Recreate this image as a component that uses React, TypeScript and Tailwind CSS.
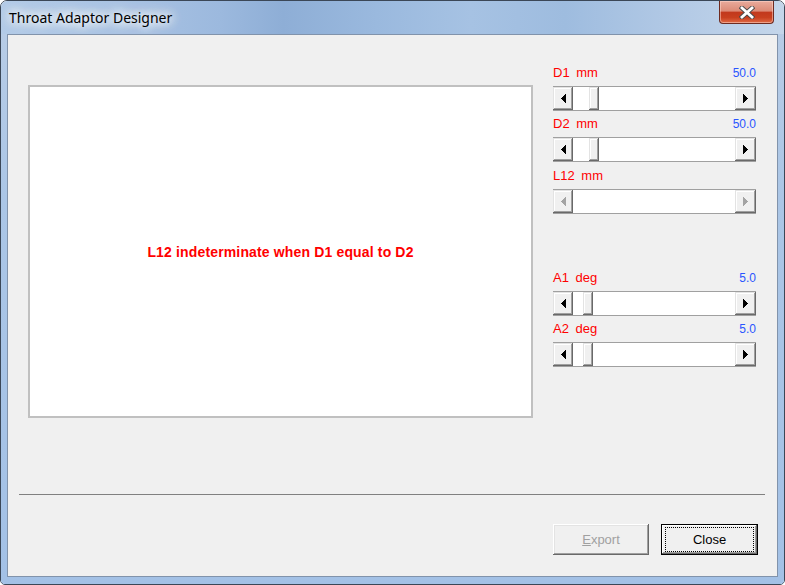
import React from "react";

const raised =
  "shadow-[inset_-1px_-1px_#696969,inset_1px_1px_#e3e3e3,inset_-2px_-2px_#a0a0a0,inset_2px_2px_#ffffff]";

function Arrow({ dir, disabled }: { dir: "left" | "right"; disabled?: boolean }) {
  return (
    <svg width="5" height="9" viewBox="0 0 5 9" shapeRendering="crispEdges">
      <polygon
        points={dir === "left" ? "5,0 0,4.5 5,9" : "0,0 5,4.5 0,9"}
        fill={disabled ? "#a3a3a3" : "#000000"}
      />
    </svg>
  );
}

function ScrollBar({ thumb, disabled }: { thumb?: number; disabled?: boolean }) {
  return (
    <div className="flex h-[25px] w-[203px] border-y border-[#a0a0a0]">
      <div className={`flex h-full w-[20px] items-center justify-center bg-[#f0f0f0] ${raised}`}>
        <Arrow dir="left" disabled={disabled} />
      </div>
      <div className="relative h-full flex-1 bg-white">
        {thumb !== undefined && (
          <div
            className={`absolute top-0 h-full w-[10px] bg-[#f0f0f0] ${raised}`}
            style={{ left: thumb }}
          />
        )}
      </div>
      <div className={`flex h-full w-[21px] items-center justify-center bg-[#f0f0f0] ${raised}`}>
        <Arrow dir="right" disabled={disabled} />
      </div>
    </div>
  );
}

function Label({ name, value }: { name: string; value?: string }) {
  return (
    <div className="mb-[6px] flex h-[14px] items-center justify-between leading-[14px] font-['Liberation_Sans',Arial,sans-serif]">
      <span className="whitespace-pre text-[13px] text-[#ff0000] [word-spacing:3px]">{name}</span>
      {value && <span className="text-[12px] text-[#2a55ff]">{value}</span>}
    </div>
  );
}

export default function App() {
  return (
    <div className="h-[585px] w-[785px] bg-white">
      <div className="flex h-full w-full flex-col overflow-hidden rounded-t-[7px] rounded-b-[5px] border border-[#3b4757]">
        {/* title bar */}
        <div className="flex h-[33px] shrink-0 items-start bg-[linear-gradient(90deg,#b3cbe7_0%,#a9c3e3_15%,#9cb9de_28%,#8eaed6_36%,#9ab9de_48%,#a6c2e3_60%,#9ebcdf_72%,#b5cbe6_88%,#c4d6ea_100%)]">
          <div className="ml-[8px] mt-[7px] text-[14px] leading-[20px] text-black font-['Noto_Sans',sans-serif] [text-shadow:0_0_10px_#ffffff,0_0_10px_#ffffff,0_0_14px_#ffffff,0_0_18px_#e6f0fa]">
            Throat Adaptor Designer
          </div>
          <div className="ml-auto mr-[10px] flex h-[23px] w-[55px] items-center justify-center rounded-b-[4px] border border-t-0 border-[#6e2b20] bg-[linear-gradient(180deg,#e9ab9c_0%,#dc8b77_45%,#c2391d_52%,#c8401f_75%,#e06a45_100%)] shadow-[inset_0_0_0_1px_rgba(255,220,210,0.5)]">
            <svg width="16" height="13" viewBox="0 0 16 13">
              <path d="M3 2 L13 11 M13 2 L3 11" stroke="#4a4a4a" strokeWidth="4.6" strokeLinecap="square" />
              <path d="M3 2 L13 11 M13 2 L3 11" stroke="#ffffff" strokeWidth="2.8" strokeLinecap="square" />
            </svg>
          </div>
        </div>

        {/* frame body */}
        <div className="flex flex-1 flex-col bg-[linear-gradient(180deg,#b7cce6_0%,#abc6e6_30%,#a3c1e6_100%)] px-[6px] pb-[7px]">
          <div className="flex flex-1 flex-col border border-[#8193ab] bg-[#f0f0f0]">
            <div className="flex h-[459px]">
              <div className="ml-[20px] mt-[50px] flex h-[333px] w-[505px] items-center justify-center border-2 border-[#c0c0c0] bg-white">
                <span className="mt-[2px] text-[14px] font-bold tracking-[0.15px] text-[#ff0000] font-['Liberation_Sans',Arial,sans-serif]">
                  L12 indeterminate when D1 equal to D2
                </span>
              </div>
              <div className="ml-[20px] mt-[31px] flex w-[203px] flex-col">
                <Label name="D1 mm" value="50.0" />
                <ScrollBar thumb={16} />
                <div className="h-[6px]" />
                <Label name="D2 mm" value="50.0" />
                <ScrollBar thumb={16} />
                <div className="h-[7px]" />
                <Label name="L12 mm" />
                <ScrollBar disabled />
                <div className="h-[57px]" />
                <Label name="A1 deg" value="5.0" />
                <ScrollBar thumb={10} />
                <div className="h-[6px]" />
                <Label name="A2 deg" value="5.0" />
                <ScrollBar thumb={10} />
              </div>
            </div>
            <div className="ml-[11px] h-px w-[746px] bg-[#808080]" />
            <div className="mt-[29px] flex justify-end gap-[12px] pr-[19px] font-['Liberation_Sans',Arial,sans-serif] text-[13px]">
              <div className="flex h-[31px] w-[96px] items-center justify-center bg-[#f0f0f0] text-[#a0a0a0] shadow-[inset_-1px_-1px_#696969,inset_1px_1px_#ffffff,inset_-2px_-2px_#a0a0a0,inset_2px_2px_#e3e3e3]">
                <span>
                  <span className="underline">E</span>xport
                </span>
              </div>
              <div className="flex h-[31px] w-[97px] border border-[#000000] bg-[#f0f0f0] px-[3px] py-[2px] shadow-[inset_-1px_-1px_#696969,inset_1px_1px_#ffffff,inset_-2px_-2px_#a0a0a0]">
                <div className="flex flex-1 items-center justify-center border border-dotted border-black text-black">
                  Close
                </div>
              </div>
            </div>
          </div>
        </div>
      </div>
    </div>
  );
}
